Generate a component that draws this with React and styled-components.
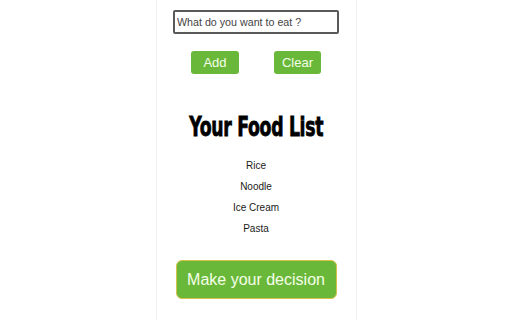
import React from "react";
import styled, { createGlobalStyle } from "styled-components";

const GlobalStyle = createGlobalStyle`
  body {
    margin: 0;
    background: #fff;
    font-family: "Liberation Sans", Arial, sans-serif;
  }
`;

const Page = styled.div`
  display: flex;
  justify-content: center;
  height: 320px;
  overflow: hidden;
`;

const Panel = styled.div`
  width: 201px;
  height: 320px;
  border-left: 1px solid #f1f1f1;
  border-right: 1px solid #f1f1f1;
  display: flex;
  flex-direction: column;
  align-items: center;
  padding-top: 10px;
  box-sizing: border-box;
`;

const Input = styled.input`
  width: 166px;
  height: 24px;
  box-sizing: border-box;
  border: 2px solid #5a5a5a;
  border-radius: 2px;
  padding: 0 2px;
  font-family: "Liberation Sans", Arial, sans-serif;
  font-size: 10.7px;
  color: #333;
  outline: none;
  &::placeholder {
    color: #444;
  }
`;

const ButtonRow = styled.div`
  display: flex;
  gap: 35px;
  margin-top: 17px;
`;

const GreenButton = styled.button`
  background: #6ab83a;
  color: #f4ffe8;
  border: none;
  border-radius: 3px;
  font-family: "Liberation Sans", Arial, sans-serif;
  font-size: 13px;
  width: ${(p) => p.$w}px;
  height: 23px;
  padding: 0;
  cursor: pointer;
`;

const Title = styled.h1`
  margin: 38px 0 0;
  font-family: "DejaVu Sans Condensed", "DejaVu Sans", sans-serif;
  font-weight: bold;
  font-size: 27px;
  line-height: 30px;
  letter-spacing: -0.4px;
  color: #000;
  -webkit-text-stroke: 0.8px #000;
  transform: scaleX(0.71);
  white-space: nowrap;
`;

const List = styled.ul`
  list-style: none;
  margin: 18px 0 0;
  padding: 0;
  display: flex;
  flex-direction: column;
  align-items: center;
  gap: 9px;
`;

const Item = styled.li`
  font-size: 10px;
  line-height: 12px;
  color: #1a1a1a;
`;

const DecideButton = styled.button`
  margin-top: 25px;
  width: 161px;
  height: 39px;
  background: #6ab83a;
  color: #f4ffe8;
  border: 1px solid #d6c24a;
  border-radius: 6px;
  font-family: "Liberation Sans", Arial, sans-serif;
  font-size: 16px;
  padding: 0;
  cursor: pointer;
`;

const foods = ["Rice", "Noodle", "Ice Cream", "Pasta"];

export default function App() {
  return (
    <>
      <GlobalStyle />
      <Page>
        <Panel>
          <Input placeholder="What do you want to eat ?" />
          <ButtonRow>
            <GreenButton $w={48}>Add</GreenButton>
            <GreenButton $w={47}>Clear</GreenButton>
          </ButtonRow>
          <Title>Your Food List</Title>
          <List>
            {foods.map((f) => (
              <Item key={f}>{f}</Item>
            ))}
          </List>
          <DecideButton>Make your decision</DecideButton>
        </Panel>
      </Page>
    </>
  );
}
